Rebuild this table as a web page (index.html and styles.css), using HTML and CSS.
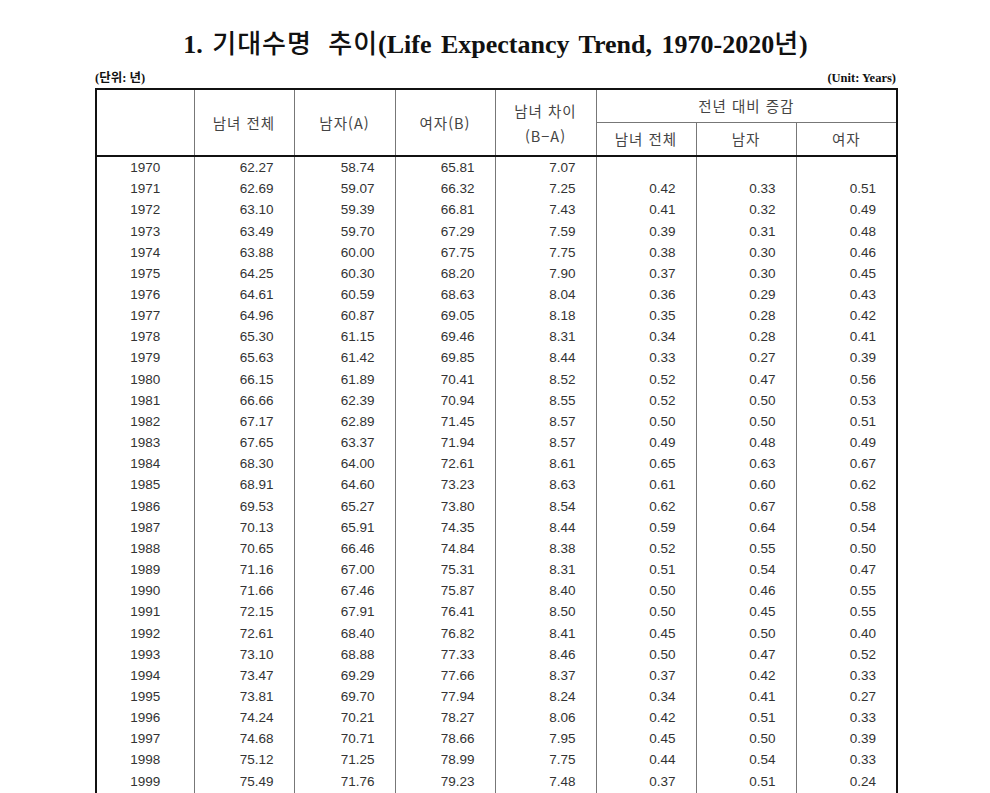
FILE: index.html
```html
<!DOCTYPE html>
<html lang="ko">
<head>
<meta charset="utf-8">
<title>기대수명 추이</title>
<link rel="stylesheet" href="styles.css">
</head>
<body>
<div class="page">
  <h1 class="title">1. <span class="ko">기대수명 추이</span>(Life Expectancy Trend, 1970-2020<span class="ko">년</span>)</h1>
  <div class="units">
    <span class="unit-ko">(단위: 년)</span>
    <span class="unit-en">(Unit: Years)</span>
  </div>
  <table class="trend">
    <colgroup>
      <col class="c1"><col class="c2"><col class="c3"><col class="c4"><col class="c5"><col class="c6"><col class="c7"><col class="c8">
    </colgroup>
    <thead>
      <tr class="h1">
        <th rowspan="2"></th>
        <th rowspan="2">남녀 전체</th>
        <th rowspan="2">남자(A)</th>
        <th rowspan="2">여자(B)</th>
        <th rowspan="2" class="two">남녀 차이<br>(B−A)</th>
        <th colspan="3" class="group">전년 대비 증감</th>
      </tr>
      <tr class="h2">
        <th>남녀 전체</th>
        <th>남자</th>
        <th>여자</th>
      </tr>
    </thead>
    <tbody>
      <tr><td>1970</td><td>62.27</td><td>58.74</td><td>65.81</td><td>7.07</td><td></td><td></td><td></td></tr>
      <tr><td>1971</td><td>62.69</td><td>59.07</td><td>66.32</td><td>7.25</td><td>0.42</td><td>0.33</td><td>0.51</td></tr>
      <tr><td>1972</td><td>63.10</td><td>59.39</td><td>66.81</td><td>7.43</td><td>0.41</td><td>0.32</td><td>0.49</td></tr>
      <tr><td>1973</td><td>63.49</td><td>59.70</td><td>67.29</td><td>7.59</td><td>0.39</td><td>0.31</td><td>0.48</td></tr>
      <tr><td>1974</td><td>63.88</td><td>60.00</td><td>67.75</td><td>7.75</td><td>0.38</td><td>0.30</td><td>0.46</td></tr>
      <tr><td>1975</td><td>64.25</td><td>60.30</td><td>68.20</td><td>7.90</td><td>0.37</td><td>0.30</td><td>0.45</td></tr>
      <tr><td>1976</td><td>64.61</td><td>60.59</td><td>68.63</td><td>8.04</td><td>0.36</td><td>0.29</td><td>0.43</td></tr>
      <tr><td>1977</td><td>64.96</td><td>60.87</td><td>69.05</td><td>8.18</td><td>0.35</td><td>0.28</td><td>0.42</td></tr>
      <tr><td>1978</td><td>65.30</td><td>61.15</td><td>69.46</td><td>8.31</td><td>0.34</td><td>0.28</td><td>0.41</td></tr>
      <tr><td>1979</td><td>65.63</td><td>61.42</td><td>69.85</td><td>8.44</td><td>0.33</td><td>0.27</td><td>0.39</td></tr>
      <tr><td>1980</td><td>66.15</td><td>61.89</td><td>70.41</td><td>8.52</td><td>0.52</td><td>0.47</td><td>0.56</td></tr>
      <tr><td>1981</td><td>66.66</td><td>62.39</td><td>70.94</td><td>8.55</td><td>0.52</td><td>0.50</td><td>0.53</td></tr>
      <tr><td>1982</td><td>67.17</td><td>62.89</td><td>71.45</td><td>8.57</td><td>0.50</td><td>0.50</td><td>0.51</td></tr>
      <tr><td>1983</td><td>67.65</td><td>63.37</td><td>71.94</td><td>8.57</td><td>0.49</td><td>0.48</td><td>0.49</td></tr>
      <tr><td>1984</td><td>68.30</td><td>64.00</td><td>72.61</td><td>8.61</td><td>0.65</td><td>0.63</td><td>0.67</td></tr>
      <tr><td>1985</td><td>68.91</td><td>64.60</td><td>73.23</td><td>8.63</td><td>0.61</td><td>0.60</td><td>0.62</td></tr>
      <tr><td>1986</td><td>69.53</td><td>65.27</td><td>73.80</td><td>8.54</td><td>0.62</td><td>0.67</td><td>0.58</td></tr>
      <tr><td>1987</td><td>70.13</td><td>65.91</td><td>74.35</td><td>8.44</td><td>0.59</td><td>0.64</td><td>0.54</td></tr>
      <tr><td>1988</td><td>70.65</td><td>66.46</td><td>74.84</td><td>8.38</td><td>0.52</td><td>0.55</td><td>0.50</td></tr>
      <tr><td>1989</td><td>71.16</td><td>67.00</td><td>75.31</td><td>8.31</td><td>0.51</td><td>0.54</td><td>0.47</td></tr>
      <tr><td>1990</td><td>71.66</td><td>67.46</td><td>75.87</td><td>8.40</td><td>0.50</td><td>0.46</td><td>0.55</td></tr>
      <tr><td>1991</td><td>72.15</td><td>67.91</td><td>76.41</td><td>8.50</td><td>0.50</td><td>0.45</td><td>0.55</td></tr>
      <tr><td>1992</td><td>72.61</td><td>68.40</td><td>76.82</td><td>8.41</td><td>0.45</td><td>0.50</td><td>0.40</td></tr>
      <tr><td>1993</td><td>73.10</td><td>68.88</td><td>77.33</td><td>8.46</td><td>0.50</td><td>0.47</td><td>0.52</td></tr>
      <tr><td>1994</td><td>73.47</td><td>69.29</td><td>77.66</td><td>8.37</td><td>0.37</td><td>0.42</td><td>0.33</td></tr>
      <tr><td>1995</td><td>73.81</td><td>69.70</td><td>77.94</td><td>8.24</td><td>0.34</td><td>0.41</td><td>0.27</td></tr>
      <tr><td>1996</td><td>74.24</td><td>70.21</td><td>78.27</td><td>8.06</td><td>0.42</td><td>0.51</td><td>0.33</td></tr>
      <tr><td>1997</td><td>74.68</td><td>70.71</td><td>78.66</td><td>7.95</td><td>0.45</td><td>0.50</td><td>0.39</td></tr>
      <tr><td>1998</td><td>75.12</td><td>71.25</td><td>78.99</td><td>7.75</td><td>0.44</td><td>0.54</td><td>0.33</td></tr>
      <tr><td>1999</td><td>75.49</td><td>71.76</td><td>79.23</td><td>7.48</td><td>0.37</td><td>0.51</td><td>0.24</td></tr>
      <tr class="below"><td>2000</td><td>76.01</td><td>72.35</td><td>79.67</td><td>7.32</td><td>0.52</td><td>0.59</td><td>0.44</td></tr>
    </tbody>
  </table>
</div>
</body>
</html>
```

FILE: styles.css
```css
html, body {
  margin: 0;
  padding: 0;
  background: #ffffff;
}

.page {
  width: 801px;
  margin: 0 0 0 95px;
  padding-top: 24px;
  color: #1a1a1a;
}

.title {
  margin: 0;
  text-align: center;
  font-family: "Liberation Serif", "Noto Sans CJK KR", serif;
  font-weight: bold;
  font-size: 26px;
  word-spacing: 3px;
  line-height: 36px;
  color: #111;
  white-space: nowrap;
}

.title .ko {
  font-family: "Noto Sans CJK KR", sans-serif;
  font-weight: 500;
  letter-spacing: 1px;
  word-spacing: 8px;
}

.units {
  display: flex;
  justify-content: space-between;
  margin-top: 4px;
  height: 21px;
  font-family: "Liberation Serif", "Noto Sans CJK KR", serif;
  font-weight: bold;
  font-size: 12.5px;
  line-height: 22px;
  color: #111;
}

.trend {
  border-collapse: collapse;
  table-layout: fixed;
  width: 801px;
  border: 2px solid #111;
  font-family: "Liberation Sans", "Noto Sans CJK KR", sans-serif;
  color: #333;
}

.c1 { width: 98px; }
.c2 { width: 100px; }
.c3 { width: 101px; }
.c4 { width: 100px; }
.c5 { width: 101px; }
.c6 { width: 100px; }
.c7 { width: 100px; }
.c8 { width: 101px; }

.trend th {
  font-family: "Noto Sans CJK KR", "Liberation Sans", sans-serif;
  font-weight: normal;
  font-size: 14.5px;
  letter-spacing: 1px;
  color: #444;
  border-left: 1px solid #777;
  padding: 0;
  line-height: 20px;
}

.trend th:first-child { border-left: none; }

.h1 th { height: 32px; }
.h2 th { height: 32px; border-top: 1px solid #777; }
.h2 th:first-child { border-left: 1px solid #777; }

.trend th.two { line-height: 25px; }

.trend thead { border-bottom: 2px solid #111; }

.trend td {
  font-size: 13.5px;
  height: 21.17px;
  padding: 0 20px 0 0;
  line-height: 21px;
  text-align: right;
  border-left: 1px solid #777;
  white-space: nowrap;
}

.trend td:first-child {
  text-align: center;
  padding: 0;
  border-left: none;
}
```
